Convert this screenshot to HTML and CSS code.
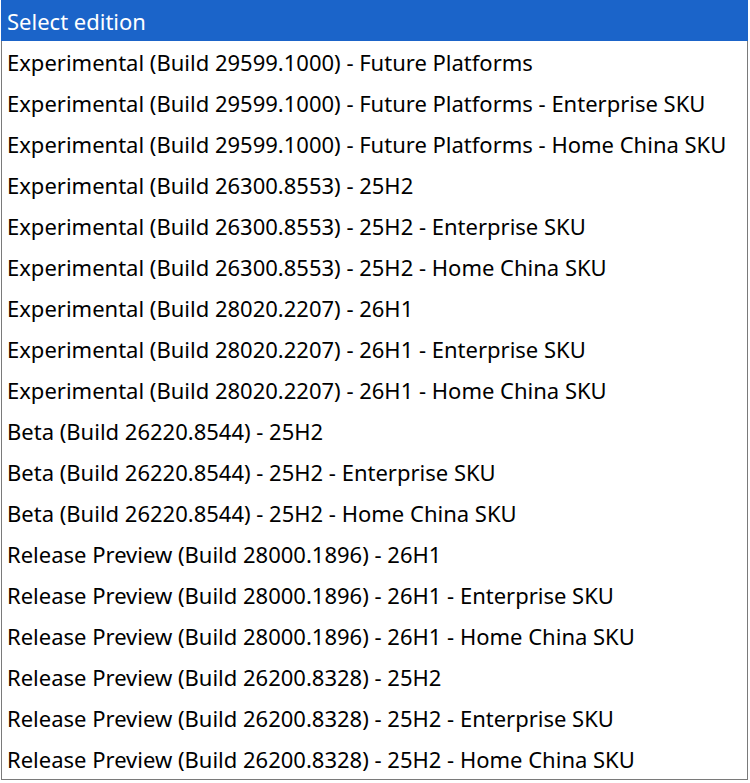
FILE: index.html
```html
<!DOCTYPE html>
<html lang="en">
<head>
    <title>Select edition</title>
    <link rel="stylesheet" href="styles.css">
</head>
<body>
    <div class="dropdown">
        <div class="option selected">Select edition</div>
        <div class="option">Experimental (Build 29599.1000) - Future Platforms</div>
        <div class="option">Experimental (Build 29599.1000) - Future Platforms - Enterprise SKU</div>
        <div class="option">Experimental (Build 29599.1000) - Future Platforms - Home China SKU</div>
        <div class="option">Experimental (Build 26300.8553) - 25H2</div>
        <div class="option">Experimental (Build 26300.8553) - 25H2 - Enterprise SKU</div>
        <div class="option">Experimental (Build 26300.8553) - 25H2 - Home China SKU</div>
        <div class="option">Experimental (Build 28020.2207) - 26H1</div>
        <div class="option">Experimental (Build 28020.2207) - 26H1 - Enterprise SKU</div>
        <div class="option">Experimental (Build 28020.2207) - 26H1 - Home China SKU</div>
        <div class="option">Beta (Build 26220.8544) - 25H2</div>
        <div class="option">Beta (Build 26220.8544) - 25H2 - Enterprise SKU</div>
        <div class="option">Beta (Build 26220.8544) - 25H2 - Home China SKU</div>
        <div class="option">Release Preview (Build 28000.1896) - 26H1</div>
        <div class="option">Release Preview (Build 28000.1896) - 26H1 - Enterprise SKU</div>
        <div class="option">Release Preview (Build 28000.1896) - 26H1 - Home China SKU</div>
        <div class="option">Release Preview (Build 26200.8328) - 25H2</div>
        <div class="option">Release Preview (Build 26200.8328) - 25H2 - Enterprise SKU</div>
        <div class="option">Release Preview (Build 26200.8328) - 25H2 - Home China SKU</div>
    </div>
</body>
</html>
```

FILE: styles.css
```css
body {
    margin: 0;
    padding: 0 2px 0 1px;
    background-color: #fff;
    font-family: "Noto Sans", sans-serif;
}
.dropdown {
    border: 1px solid #7a7a7a;
    border-top: none;
    background-color: #fff;
}
.option {
    height: 41px;
    line-height: 42px;
    padding-left: 5px;
    font-size: 22px;
    color: #000;
    white-space: nowrap;
}
.selected {
    background-color: #1b64c9;
    color: #fff;
    margin-left: -1px;
    margin-right: -1px;
    padding-left: 6px;
}
```
